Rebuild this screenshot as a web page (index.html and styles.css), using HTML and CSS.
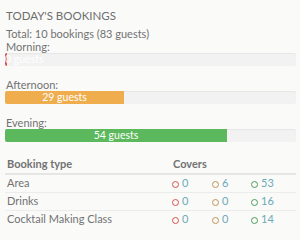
FILE: index.html
```html
<!DOCTYPE html>
<html lang="en">
<head>
    <meta charset="UTF-8">
    <title>Today's bookings</title>
    <link rel="stylesheet" href="styles.css">
</head>
<body>
    <div class="panel">
        <h3 class="panel-title">Today's bookings</h3>
        <p class="total">Total: 10 bookings (83 guests)</p>

        <div class="period">
            <div class="period-label">Morning:</div>
            <div class="bar">
                <div class="bar-fill red" style="width: 2px;">0 guests</div>
            </div>
        </div>
        <div class="period">
            <div class="period-label">Afternoon:</div>
            <div class="bar">
                <div class="bar-fill orange" style="width: 40.9%;">29 guests</div>
            </div>
        </div>
        <div class="period">
            <div class="period-label">Evening:</div>
            <div class="bar">
                <div class="bar-fill green" style="width: 76.3%;">54 guests</div>
            </div>
        </div>

        <table class="types">
            <colgroup>
                <col class="col-type">
                <col class="col-red">
                <col class="col-orange">
                <col class="col-green">
            </colgroup>
            <thead>
                <tr>
                    <th>Booking type</th>
                    <th colspan="3" class="covers-head">Covers</th>
                </tr>
            </thead>
            <tbody>
                <tr>
                    <td>Area</td>
                    <td class="cover"><span class="dot red"></span>0</td>
                    <td class="cover"><span class="dot orange"></span>6</td>
                    <td class="cover"><span class="dot green"></span>53</td>
                </tr>
                <tr>
                    <td>Drinks</td>
                    <td class="cover"><span class="dot red"></span>0</td>
                    <td class="cover"><span class="dot orange"></span>0</td>
                    <td class="cover"><span class="dot green"></span>16</td>
                </tr>
                <tr>
                    <td>Cocktail Making Class</td>
                    <td class="cover"><span class="dot red"></span>0</td>
                    <td class="cover"><span class="dot orange"></span>0</td>
                    <td class="cover"><span class="dot green"></span>14</td>
                </tr>
            </tbody>
        </table>
    </div>
</body>
</html>
```

FILE: styles.css
```css
body {
    margin: 0;
    background: #fafaf9;
    font-family: Lato, "Open Sans", Arial, sans-serif;
    font-size: 11px;
    color: #727272;
}
.panel {
    padding: 9px 4px 0 5px;
}
.panel-title {
    margin: 0 0 4px 1px;
    font-size: 11.5px;
    line-height: 14px;
    font-weight: 400;
    text-transform: uppercase;
    color: #6e6e6e;
}
.total {
    margin: 0 0 0 1px;
    line-height: 13px;
}
.period {
    margin-bottom: 12px;
}
.period:last-of-type {
    margin-bottom: 0;
}
.period-label {
    margin-left: 1px;
    line-height: 13px;
}
.bar {
    height: 13px;
    background: #f2f2f2;
    border-radius: 2px;
    box-shadow: inset 0 1px 1px rgba(0,0,0,0.05);
    overflow: hidden;
}
.bar-fill {
    height: 100%;
    color: #fff;
    line-height: 13px;
    text-align: center;
    font-size: 10.5px;
    white-space: nowrap;
}
.bar-fill.red { background: #d9534f; }
.bar-fill.orange { background: #f0ad4e; }
.bar-fill.green { background: #5cb85c; }
.types {
    width: 100%;
    margin-top: 15px;
    border-collapse: collapse;
    table-layout: fixed;
}
.col-type { width: 165px; }
.col-red { width: 40px; }
.col-orange { width: 39px; }
.col-green { width: 47px; }
.types th {
    text-align: left;
    font-weight: 700;
    line-height: 13px;
    padding: 0 2px 3px;
    border-bottom: 2px solid #e6e6e6;
}
.types th.covers-head {
    padding-left: 3px;
}
.types td {
    line-height: 13px;
    padding: 1px 2px 3px;
    border-bottom: 1px solid #ececec;
}
.types tbody tr:last-child td { border-bottom: none; }
.cover {
    color: #6aa9b9;
}
.dot {
    display: inline-block;
    width: 5px;
    height: 5px;
    margin-right: 3px;
    border: 1.3px solid;
    border-radius: 50%;
    vertical-align: -0.5px;
}
.dot.red { border-color: #d9534f; }
.dot.orange { border-color: #c09455; }
.dot.green { border-color: #4f9a5a; }
```
